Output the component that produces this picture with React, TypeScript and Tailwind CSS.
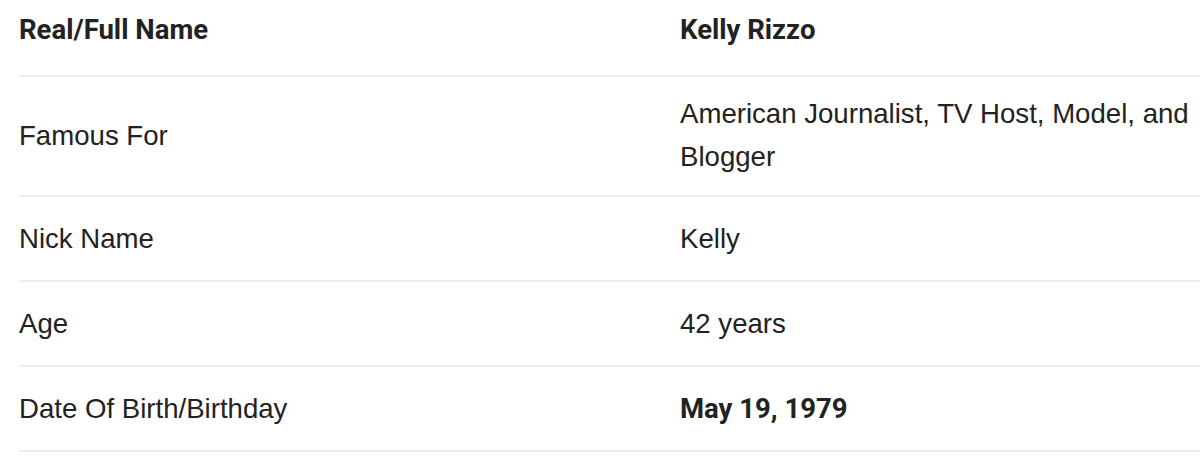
import React from 'react';

const rows = [
  { label: 'Real/Full Name', value: 'Kelly Rizzo', labelBold: true, valueBold: true, pad: 'pt-[8px] pb-[24px]' },
  { label: 'Famous For', value: 'American Journalist, TV Host, Model, and Blogger', pad: 'pt-[15px] pb-[17px]' },
  { label: 'Nick Name', value: 'Kelly', pad: 'pt-[20px] pb-[20px]' },
  { label: 'Age', value: '42 years', pad: 'pt-[20px] pb-[20px]' },
  { label: 'Date Of Birth/Birthday', value: 'May 19, 1979', valueBold: true, pad: 'pt-[20px] pb-[20px]' },
];

export default function App() {
  return (
    <div className="w-[1200px] h-[460px] bg-white overflow-hidden pl-[19px] font-[Liberation_Sans,Arial,sans-serif] text-[27.6px] leading-[43px] text-[#222]">
      {rows.map((row) => (
        <div
          key={row.label}
          className={`grid grid-cols-[661px_1fr] items-center border-b-2 border-[#ededed] ${row.pad}`}
        >
          <div>
            {row.labelBold ? (
              <strong className="font-[Roboto,sans-serif] font-bold text-[27.5px]">{row.label}</strong>
            ) : (
              row.label
            )}
          </div>
          <div>
            {row.valueBold ? (
              <strong className="font-[Roboto,sans-serif] font-bold text-[27.5px]">{row.value}</strong>
            ) : (
              row.value
            )}
          </div>
        </div>
      ))}
    </div>
  );
}
